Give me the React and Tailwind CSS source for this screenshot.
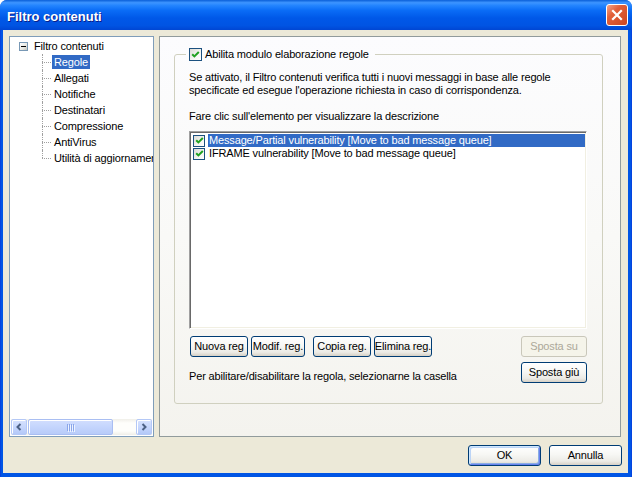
import React from 'react'

const TREE = ['Regole', 'Allegati', 'Notifiche', 'Destinatari', 'Compressione', 'AntiVirus', 'Utilità di aggiornamento']

const RULES = [
  { label: 'Message/Partial vulnerability [Move to bad message queue]', selected: true },
  { label: 'IFRAME vulnerability [Move to bad message queue]', selected: false },
]

const RULE_BUTTONS = [
  { label: 'Nuova reg', cls: 'ml-[1px] w-[58px]' },
  { label: 'Modif. reg.', cls: 'ml-[3px] w-[54px]' },
  { label: 'Copia reg.', cls: 'ml-[8px] w-[58px]' },
  { label: 'Elimina reg.', cls: 'ml-[3px] w-[58px]' },
]

function XpCheck({ small }) {
  return (
    <span
      className={`flex shrink-0 items-center justify-center border border-[#1c5180] bg-[linear-gradient(135deg,#dcdcd7_0%,#f3f3ef_55%,#ffffff_100%)] ${
        small ? 'w-[12px] h-[12px]' : 'w-[13px] h-[13px]'
      }`}
    >
      <svg width="9" height="9" viewBox="0 0 9 9">
        <path d="M1.2 4.2 L3.4 6.4 L7.8 2" fill="none" stroke="#21a121" strokeWidth="2" />
      </svg>
    </span>
  )
}

function XpButton({ children, className = '', disabled, isDefault }) {
  return (
    <div
      className={`flex h-[21px] items-center justify-center whitespace-nowrap overflow-hidden rounded-[3px] border ${
        disabled
          ? 'border-[#c9c7ba] bg-[#f5f4ea] text-[#aca899]'
          : 'border-[#003c74] bg-[linear-gradient(180deg,#ffffff_0%,#f7f7f4_45%,#ecebe6_80%,#d6d0c5_100%)] text-black'
      } ${isDefault ? 'shadow-[inset_1px_1px_0_#cee7ff,inset_-1px_-1px_0_#6982ee,inset_2px_2px_0_#bcd4f6,inset_-2px_-2px_0_#89ade4]' : ''} ${className}`}
    >
      {children}
    </div>
  )
}

function ScrollArrow({ left }) {
  return (
    <div className="flex w-[16px] h-full shrink-0 items-center justify-center rounded-[2px] border border-[#b4c8f6] bg-[linear-gradient(180deg,#d6e2fe_0%,#c3d4fc_60%,#b3c8f8_100%)] shadow-[inset_1px_1px_0_#ffffff]">
      <svg width="8" height="8" viewBox="0 0 8 8">
        <path
          d={left ? 'M5.5 1 L2.5 4 L5.5 7' : 'M2.5 1 L5.5 4 L2.5 7'}
          fill="none"
          stroke="#4d6185"
          strokeWidth="2"
        />
      </svg>
    </div>
  )
}

export default function App() {
  return (
    <div className="w-[632px] h-[477px] bg-white font-['Liberation_Sans',Arial,sans-serif] text-[11px] leading-[13px] text-black">
      <div className="flex flex-col h-full rounded-t-[7px] overflow-hidden bg-[#0055e5]">

        {/* title bar */}
        <div className="flex h-[30px] shrink-0 items-center pl-[7px] pt-[2px] bg-[linear-gradient(180deg,#0a5fd8_0%,#3d95ff_9%,#2485fe_18%,#0a6cf6_35%,#0058e8_60%,#0054e3_85%,#0046d3_100%)]">
          <span className="text-[13px] leading-[15px] font-bold text-white [text-shadow:1px_1px_0_#0a1e8a]">
            Filtro contenuti
          </span>
          <div className="ml-auto mr-[4px] -mt-[2px] flex w-[22px] h-[22px] items-center justify-center rounded-[3px] border border-white bg-[linear-gradient(135deg,#f4a58a_0%,#e2603a_35%,#cc4620_100%)]">
            <svg width="12" height="12" viewBox="0 0 12 12">
              <path d="M2 2 L10 10 M10 2 L2 10" stroke="#ffffff" strokeWidth="2.2" strokeLinecap="square" />
            </svg>
          </div>
        </div>

        {/* window body with frame */}
        <div className="flex flex-1 pl-[3px] pr-[4px] pb-[4px] bg-[linear-gradient(90deg,#0831d9_0px,#0055e5_1px,#0055e5_calc(100%-1px),#0831d9_100%)]">
          <div className="flex flex-col flex-1 bg-[#ece9d8] pt-[6px] pl-[6px] pr-[7px] tracking-[-0.15px]">

            <div className="flex h-[401px] gap-[5px]">
              {/* tree */}
              <div className="flex flex-col w-[145px] shrink-0 border border-[#7f9db9] bg-white">
                <div className="flex-1 overflow-hidden pt-[1px]">
                  <div className="flex h-[16px] items-center">
                    <div className="ml-[9px] flex w-[9px] h-[9px] items-center justify-center border border-[#7898b5] bg-[linear-gradient(135deg,#ffffff_0%,#e8e8e2_60%,#c4c4bc_100%)]">
                      <div className="w-[5px] h-[1px] bg-black" />
                    </div>
                    <span className="ml-[6px] whitespace-nowrap">Filtro contenuti</span>
                  </div>
                  {TREE.map((t, i) => (
                    <div key={t} className="flex h-[16px] items-stretch pl-[32px] whitespace-nowrap">
                      <div className="relative w-[10px] shrink-0">
                        <div
                          className={`absolute left-0 top-0 border-l border-dotted border-[#a0a0a0] ${
                            i === TREE.length - 1 ? 'h-[8px]' : 'h-[16px]'
                          }`}
                        />
                        <div className="absolute left-0 top-[8px] w-[9px] border-t border-dotted border-[#a0a0a0]" />
                      </div>
                      <div className="flex items-center">
                        <span className={`px-[2px] h-[14px] leading-[14px] ${i === 0 ? 'bg-[#316ac5] text-white' : ''}`}>{t}</span>
                      </div>
                    </div>
                  ))}
                </div>

                {/* horizontal scrollbar */}
                <div className="flex h-[16px] mx-[1px] mb-[1px] shrink-0 bg-[linear-gradient(180deg,#f0efe9_0%,#fefefb_25%,#fefefb_75%,#efeee8_100%)]">
                  <ScrollArrow left />
                  <div className="ml-[1px] flex w-[85px] items-center justify-center rounded-[2px] border border-[#a9bef2] bg-[linear-gradient(180deg,#d2defe_0%,#c4d5fd_50%,#b8cbf9_100%)] shadow-[inset_1px_1px_0_#ffffff]">
                    <div className="flex gap-[1px]">
                      {[0, 1, 2, 3].map((g) => (
                        <div key={g} className="w-[1px] h-[7px] bg-[#8aa6ea] shadow-[1px_1px_0_#eef3ff]" />
                      ))}
                    </div>
                  </div>
                  <div className="flex-1" />
                  <ScrollArrow />
                </div>
              </div>

              {/* right pane */}
              <div className="flex-1 border border-[#919b9c] bg-[linear-gradient(180deg,#fcfcfe_0%,#f9f9f7_50%,#f4f3ee_100%)]">
                <fieldset className="ml-[14px] mt-[11px] w-[429px] h-[356px] min-w-0 rounded-[3px] border border-[#d0d0bf]">
                  <legend className="ml-[11px] px-[3px] pr-[6px]">
                    <div className="flex h-[13px] items-center gap-[3px]">
                      <XpCheck />
                      <span className="whitespace-nowrap">Abilita modulo elaborazione regole</span>
                    </div>
                  </legend>

                  <div className="flex flex-col pl-[14px] pr-[15px]">
                    <p className="mt-[10px]">
                      Se attivato, il Filtro contenuti verifica tutti i nuovi messaggi in base alle regole
                      <br />
                      specificate ed esegue l'operazione richiesta in caso di corrispondenza.
                    </p>
                    <p className="mt-[13px]">Fare clic sull'elemento per visualizzare la descrizione</p>

                    {/* rules list */}
                    <div className="mt-[8px] h-[198px] border border-[#a0a0a0] border-r-white border-b-white bg-white shadow-[inset_1px_1px_0_#696969,inset_-1px_-1px_0_#f1efe2] pt-[2px] pl-[2px] pr-[1px]">
                      {RULES.map((r) => (
                        <div key={r.label} className="flex h-[13px] items-center whitespace-nowrap">
                          <div className="ml-[1px]">
                            <XpCheck small />
                          </div>
                          <span
                            className={`ml-[3px] flex-1 pl-[1px] h-[13px] leading-[13px] ${
                              r.selected ? 'bg-[#316ac5] text-white' : ''
                            }`}
                          >
                            {r.label}
                          </span>
                        </div>
                      ))}
                    </div>

                    <div className="mt-[7px] flex justify-between">
                      <div className="flex flex-col">
                        <div className="flex">
                          {RULE_BUTTONS.map((b) => (
                            <XpButton key={b.label} className={b.cls}>
                              {b.label}
                            </XpButton>
                          ))}
                        </div>
                        <p className="mt-[13px] whitespace-nowrap">Per abilitare/disabilitare la regola, selezionarne la casella</p>
                      </div>
                      <div className="flex flex-col gap-[5px]">
                        <XpButton disabled className="w-[66px]">Sposta su</XpButton>
                        <XpButton className="w-[66px]">Sposta giù</XpButton>
                      </div>
                    </div>
                  </div>
                </fieldset>
              </div>
            </div>

            {/* dialog buttons */}
            <div className="mt-[8px] mr-[-1px] flex justify-end gap-[8px]">
              <XpButton isDefault className="w-[73px]">OK</XpButton>
              <XpButton className="w-[73px]">Annulla</XpButton>
            </div>
          </div>
        </div>
      </div>
    </div>
  )
}
